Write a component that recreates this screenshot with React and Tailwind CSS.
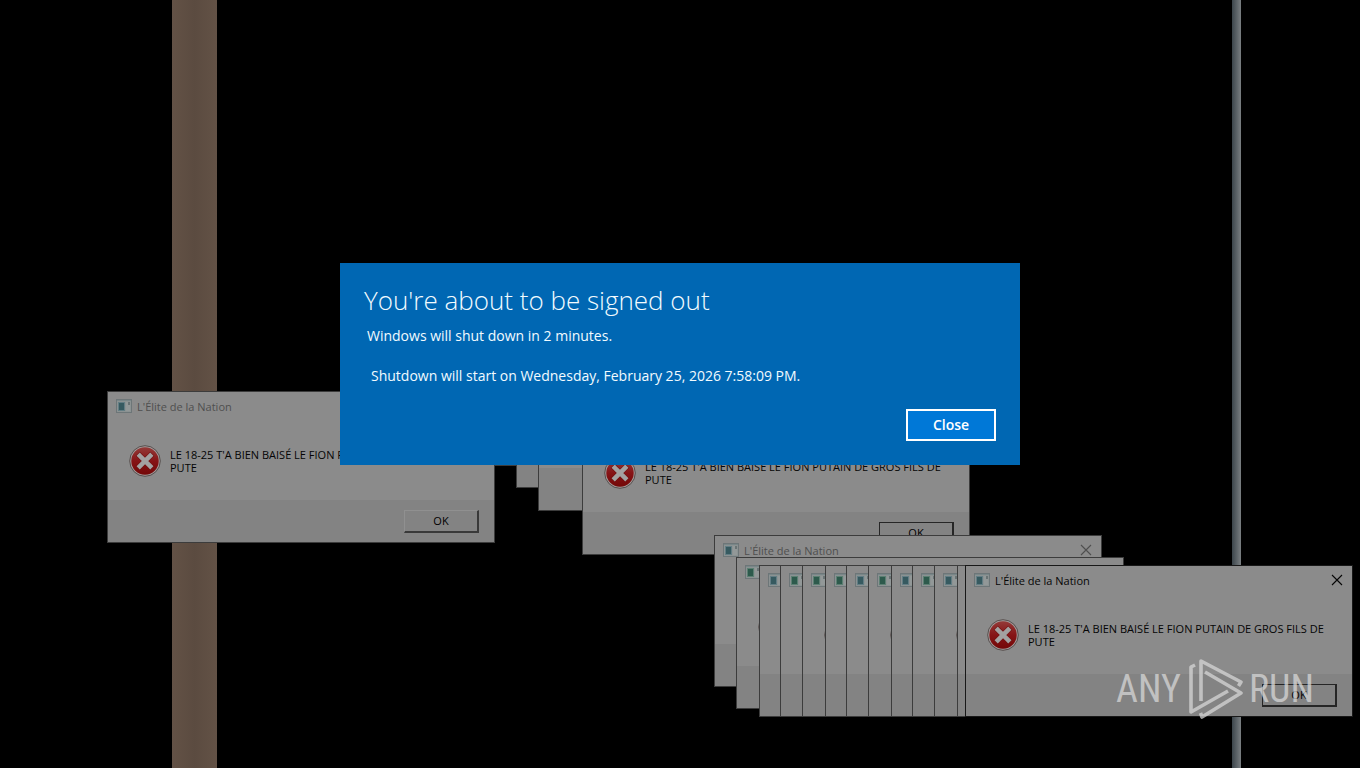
import React from "react";

const TITLE = "L'Élite de la Nation";
const MESSAGE = "LE 18-25 T'A BIEN BAISÉ LE FION PUTAIN DE GROS FILS DE PUTE";

const WINDOWS = [
  { x: 494, y: 314, bare: true },
  { x: 516, y: 336, bare: true },
  { x: 538, y: 359, bare: true },
  { x: 582, y: 403, focusedButton: true, hideTitle: true },
  { x: 107, y: 391 },
  { x: 714, y: 535, titleOnly: true },
  { x: 736, y: 557, bare: true, tint: "green" },
  { x: 759, y: 565, bare: true },
  { x: 780, y: 565, bare: true, tint: "green" },
  { x: 802, y: 565, bare: true, tint: "green" },
  { x: 825, y: 565, bare: true, tint: "green" },
  { x: 846, y: 565, bare: true },
  { x: 868, y: 565, bare: true, tint: "green" },
  { x: 891, y: 565, bare: true },
  { x: 912, y: 565, bare: true, tint: "green" },
  { x: 934, y: 565, bare: true },
  { x: 957, y: 565, bare: true, noIcon: true },
  { x: 965, y: 565, active: true, focusedButton: true },
];

function AppIcon({ tint }) {
  return (
    <svg width="16" height="14" viewBox="0 0 16 14" className="shrink-0" aria-hidden="true">
      <rect x="0.5" y="0.5" width="15" height="13" fill="#8b9292" stroke="#6d7678" />
      <rect x="1" y="1" width="14" height="1" fill="#788688" />
      <rect x="2" y="3" width="7" height="9" fill={tint === "green" ? "#5b7f72" : "#627d84"} />
      <rect x="3" y="4" width="5" height="7" fill={tint === "green" ? "#2d5a4c" : "#365a60"} />
      <rect x="10" y="3" width="4" height="9" fill="#929898" />
      <rect x="12" y="3" width="2" height="3" fill="#697374" />
    </svg>
  );
}

function ErrorIcon() {
  return (
    <svg width="32" height="32" viewBox="0 0 32 32" className="shrink-0" aria-hidden="true">
      <defs>
        <linearGradient id="errorRed" x1="0" y1="0" x2="0" y2="1">
          <stop offset="0" stopColor="#943a38" />
          <stop offset="0.5" stopColor="#861416" />
          <stop offset="1" stopColor="#740808" />
        </linearGradient>
      </defs>
      <circle cx="16" cy="16" r="15.3" fill="#a29c9b" stroke="#4f4645" strokeWidth="0.9" />
      <circle cx="16" cy="16" r="13.7" fill="url(#errorRed)" />
      <path d="M10.8 10.8 21.2 21.2M21.2 10.8 10.8 21.2" stroke="#701010" strokeWidth="5.8" strokeLinecap="square" />
      <path d="M10.8 10.8 21.2 21.2M21.2 10.8 10.8 21.2" stroke="#a3a1a1" strokeWidth="4.6" strokeLinecap="square" />
    </svg>
  );
}

function MessageWindow({ x, y, bare, titleOnly, hideTitle, active, focusedButton, noIcon, tint }) {
  const showTitle = !bare && !hideTitle;
  const showBody = !bare && !titleOnly;
  return (
    <section
      className={`absolute flex h-[152px] w-[388px] flex-col border bg-[#8b8b8b] ${
        active ? "border-[#181818]" : "border-[#3c3c3c]"
      }`}
      style={{ left: x, top: y }}
    >
      <header className="flex h-7 items-center pr-[9px] pl-2">
        {!noIcon && <AppIcon tint={tint} />}
        {showTitle && (
          <>
            <h2
              className={`ml-[5px] flex-1 pt-[2px] text-[11px] leading-4 whitespace-nowrap ${
                active ? "text-[#060606]" : "text-[#4f4f4f]"
              }`}
            >
              {TITLE}
            </h2>
            <button type="button" aria-label="Close window" className={active ? "text-[#060606]" : "text-[#4f4f4f]"}>
              <svg width="12" height="12" viewBox="0 0 12 12" aria-hidden="true">
                <path d="M1 1 11 11M11 1 1 11" stroke="currentColor" strokeWidth="1.1" />
              </svg>
            </button>
          </>
        )}
      </header>
      <div className="flex flex-1 items-start pt-[25px] pl-[21px]">
        {!noIcon && <ErrorIcon />}
        {showBody && (
          <p className="ml-[9px] mt-[3px] w-[306px] text-[11px] leading-[13px] text-[#050505]">{MESSAGE}</p>
        )}
      </div>
      <footer className="flex h-[42px] items-center justify-end bg-[#838383] pr-[15px]">
        {showBody && (
          <button
            type="button"
            className={`h-[23px] w-[75px] text-[11px] leading-none text-black ${
              focusedButton
                ? "border border-r-2 border-b-2 border-[#262626]"
                : "border-t border-l border-r-2 border-b-2 border-t-[#909090] border-l-[#909090] border-r-[#393939] border-b-[#393939]"
            }`}
          >
            OK
          </button>
        )}
      </footer>
    </section>
  );
}

function Watermark() {
  return (
    <div className="absolute right-[46px] bottom-12 flex h-[62px] items-center text-[#d6d6d6] opacity-75">
      <span className="font-['Roboto_Condensed','Liberation_Sans_Narrow',sans-serif] text-[38px] leading-none">ANY</span>
      <svg width="56" height="62" viewBox="0 0 56 62" className="mx-[6px]" fill="none" aria-hidden="true">
        <g stroke="currentColor" strokeWidth="3.6" strokeLinejoin="round" strokeLinecap="butt">
          <path d="M8 7 4 9V54L41 33" />
          <path d="M14 43V3L54 24 51.500 28" />
          <path d="M18 14 54 35 15 59 13.500 55" />
        </g>
      </svg>
      <span className="font-['Roboto_Condensed','Liberation_Sans_Narrow',sans-serif] text-[38px] leading-none">RUN</span>
    </div>
  );
}

function SignOutDialog() {
  return (
    <section
      role="dialog"
      aria-labelledby="signout-title"
      className="absolute top-[263px] left-1/2 flex w-1/2 -translate-x-1/2 flex-col bg-[#0067b3] px-6 pt-[19px] pb-6 text-[#f2fbff]"
    >
      <h1 id="signout-title" className="text-[26px] leading-9 font-[350]">
        You're about to be signed out
      </h1>
      <p className="mt-2 pl-[3px] text-sm leading-5">Windows will shut down in 2 minutes.</p>
      <p className="mt-5 pl-[7px] text-sm leading-5">
        Shutdown will start on Wednesday, February 25, 2026 7:58:09 PM.
      </p>
      <button
        type="button"
        className="mt-[23px] h-8 w-[90px] self-end border-2 border-white bg-[#0078d7] text-sm leading-none font-semibold text-white"
      >
        Close
      </button>
    </section>
  );
}

export default function App() {
  return (
    <main className="relative h-screen overflow-hidden bg-black font-['Open_Sans','Noto_Sans',sans-serif]">
      <div className="absolute inset-y-0 left-[172px] w-[45px] bg-linear-to-r from-[#635246] via-[#5b4b40] to-[#635246]" />
      <div className="absolute inset-y-0 left-[1232px] w-[9px] bg-linear-to-r from-[#3c454b] to-[#7a7f82]" />
      {WINDOWS.map((w) => (
        <MessageWindow key={`${w.x}-${w.y}`} {...w} />
      ))}
      <SignOutDialog />
      <Watermark />
    </main>
  );
}
